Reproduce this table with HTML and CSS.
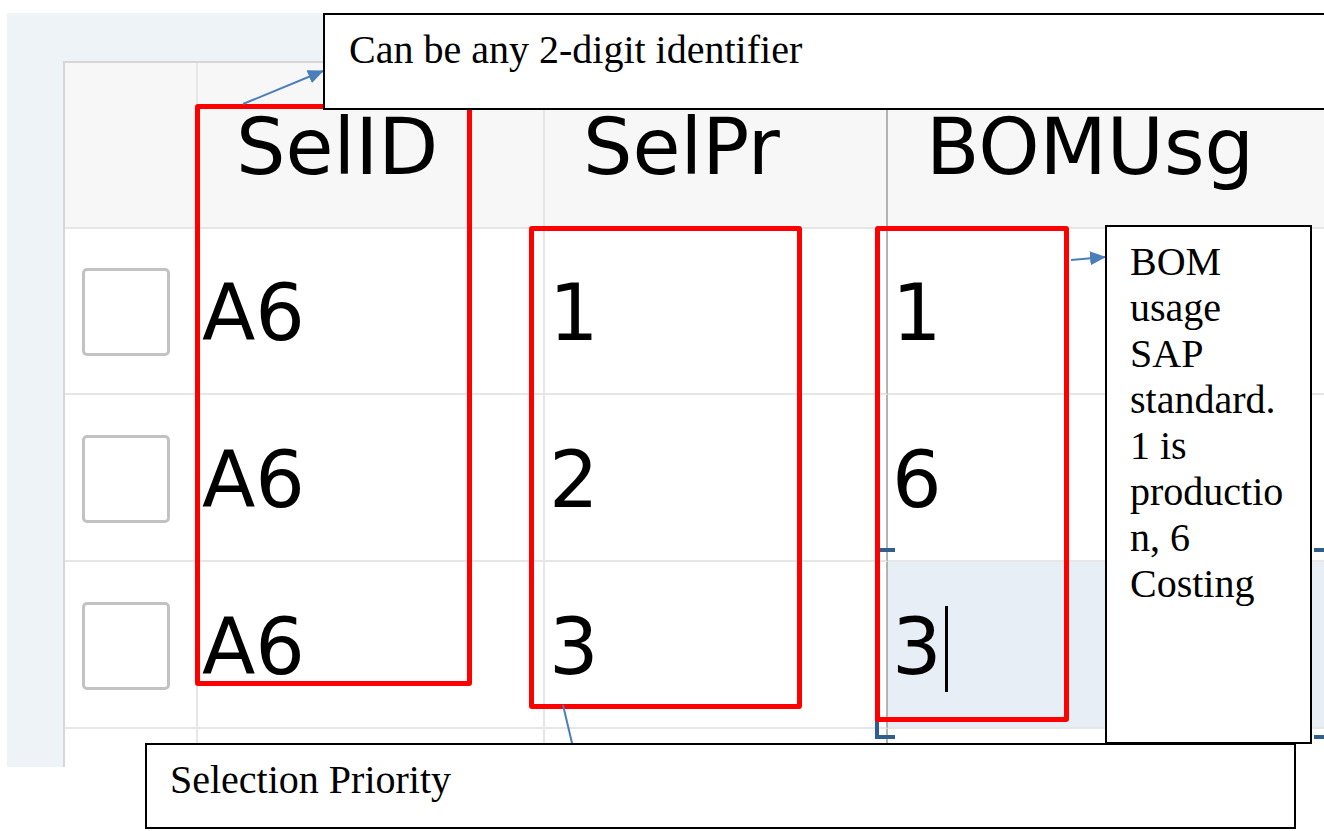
FILE: index.html
```html
<!DOCTYPE html>
<html lang="en">
<head>
<meta charset="utf-8">
<title>BOM selection table</title>
<link rel="stylesheet" href="styles.css">
</head>
<body>
<div class="screen">
  <div class="panel">
    <div class="grid">
      <div class="cell head sel-col"></div>
      <div class="cell head">SelID</div>
      <div class="cell head sep">SelPr</div>
      <div class="cell head">BOMUsg</div>
      <div class="cell head"></div>

      <div class="cell sel-col"><span class="box"></span></div>
      <div class="cell data">A6</div>
      <div class="cell data sep">1</div>
      <div class="cell data">1</div>
      <div class="cell data"></div>

      <div class="cell sel-col"><span class="box"></span></div>
      <div class="cell data">A6</div>
      <div class="cell data sep">2</div>
      <div class="cell data">6</div>
      <div class="cell data"></div>

      <div class="cell sel-col"><span class="box"></span></div>
      <div class="cell data">A6</div>
      <div class="cell data sep">3</div>
      <div class="cell data active">3<span class="caret"></span>
        <span class="focus">
          <span class="corner tl"></span><span class="corner tr"></span>
          <span class="corner bl"></span><span class="corner br"></span>
        </span>
      </div>
      <div class="cell data active-rest"></div>

      <div class="cell sel-col"></div>
      <div class="cell data"></div>
      <div class="cell data sep"></div>
      <div class="cell data"></div>
      <div class="cell data"></div>
    </div>
  </div>

  <div class="mark mark-id"></div>
  <div class="mark mark-pr"></div>
  <div class="mark mark-bom"></div>

  <svg class="arrows" width="1324" height="831" viewBox="0 0 1324 831">
    <defs>
      <marker id="headL" markerWidth="16" markerHeight="14" refX="15" refY="7" orient="auto" markerUnits="userSpaceOnUse">
        <path d="M0,0 L16,7 L0,14 Z" fill="#4a7ebb"/>
      </marker>
    </defs>
    <line x1="243" y1="104" x2="323" y2="71" stroke="#4a7ebb" stroke-width="2" marker-end="url(#headL)"/>
    <line x1="1071" y1="260" x2="1105" y2="257" stroke="#4a7ebb" stroke-width="2" marker-end="url(#headL)"/>
    <line x1="563" y1="705" x2="572" y2="743" stroke="#4a7ebb" stroke-width="2"/>
  </svg>

  <div class="note note-top">Can be any 2-digit identifier</div>
  <div class="note note-right">BOM<br>usage<br>SAP<br>standard.<br>1 is<br>productio<br>n, 6<br>Costing</div>
  <div class="note note-bottom">Selection Priority</div>
</div>
</body>
</html>
```

FILE: styles.css
```css
html, body {
  margin: 0;
  padding: 0;
  background: #ffffff;
}

.screen {
  position: relative;
  width: 1324px;
  height: 831px;
  padding: 13px 0 0 7px;
  box-sizing: border-box;
  overflow: hidden;
}

.panel {
  width: 1317px;
  height: 754px;
  background: #eef3f8;
  padding: 48px 0 0 56px;
  box-sizing: border-box;
  overflow: hidden;
}

.grid {
  display: grid;
  grid-template-columns: 133px 347px 343px 438px 300px;
  grid-template-rows: 166px 166px 167px 167px 100px;
  width: max-content;
  border-left: 2px solid #d6d6d6;
  border-top: 2px solid #d6d6d6;
  background: #ffffff;
}

.cell {
  display: flex;
  align-items: center;
  box-sizing: border-box;
  border-right: 2px solid #e6e6e6;
  border-bottom: 2px solid #e6e6e6;
  padding-top: 4px;
  font-family: "DejaVu Sans", "Open Sans", sans-serif;
  font-size: 78px;
  color: #000000;
  white-space: nowrap;
}

.cell.sep {
  border-right-color: #b3b3b3;
}

.head {
  background: #f7f7f7;
  padding-left: 38px;
}

.head.sel-col {
  padding-left: 0;
}

.data {
  padding-left: 4px;
}

.sel-col {
  padding-left: 17px;
  padding-top: 0;
}

.box {
  display: block;
  width: 88px;
  height: 88px;
  box-sizing: border-box;
  border: 3px solid #c2c2c2;
  border-radius: 5px;
  background: #ffffff;
  margin-top: 2px;
}

.active {
  position: relative;
  background: #e7eef6;
}

.active-rest {
  background: #e7eef6;
}

.caret {
  display: inline-block;
  width: 3px;
  height: 86px;
  background: #000000;
  margin-left: 3px;
  margin-top: 4px;
}

.focus {
  position: absolute;
  top: -14px;
  bottom: -12px;
  left: -13px;
  right: -10px;
}

.corner {
  position: absolute;
  width: 20px;
  height: 20px;
  box-sizing: border-box;
  border: 0 solid #2f5f8c;
}

.corner.tl { top: 0; left: 0; border-top-width: 4px; border-left-width: 4px; }
.corner.tr { top: 0; right: 0; border-top-width: 4px; border-right-width: 4px; }
.corner.bl { bottom: 0; left: 0; border-bottom-width: 4px; border-left-width: 4px; }
.corner.br { bottom: 0; right: 0; border-bottom-width: 4px; border-right-width: 4px; }

.mark {
  position: absolute;
  border: 5px solid #ff0000;
  border-radius: 3px;
  box-sizing: border-box;
}

.mark-id { left: 195px; top: 104px; width: 277px; height: 582px; }
.mark-pr { left: 529px; top: 226px; width: 273px; height: 483px; }
.mark-bom { left: 875px; top: 226px; width: 194px; height: 496px; }

.arrows {
  position: absolute;
  left: 0;
  top: 0;
  pointer-events: none;
}

.note {
  position: absolute;
  background: #ffffff;
  border: 2px solid #000000;
  box-sizing: border-box;
  font-family: "Liberation Serif", "Times New Roman", serif;
  font-size: 40px;
  line-height: 46px;
  color: #000000;
}

.note-top {
  left: 323px;
  top: 13px;
  width: 1020px;
  height: 97px;
  padding: 12px 0 0 24px;
}

.note-right {
  left: 1105px;
  top: 225px;
  width: 207px;
  height: 519px;
  padding: 12px 0 0 23px;
}

.note-bottom {
  left: 145px;
  top: 743px;
  width: 1151px;
  height: 86px;
  padding: 12px 0 0 23px;
}
```
